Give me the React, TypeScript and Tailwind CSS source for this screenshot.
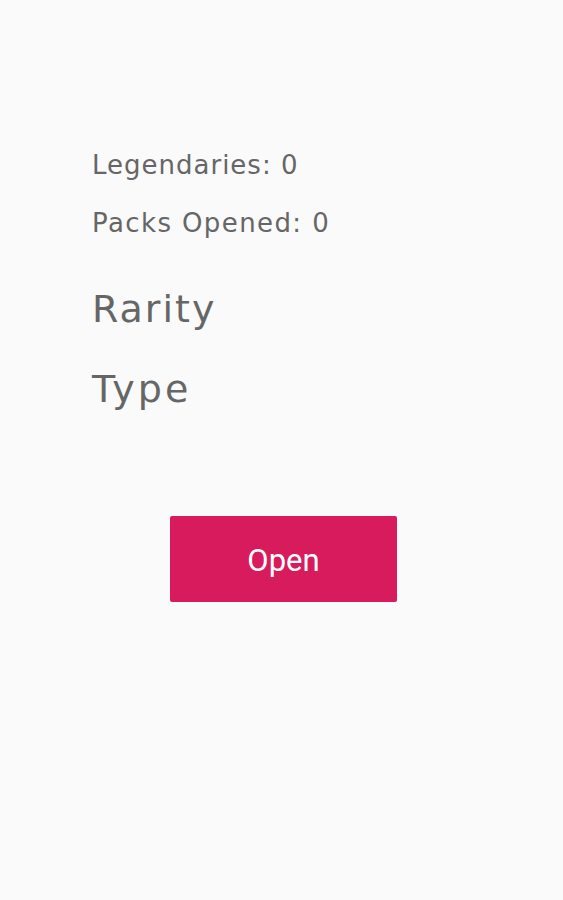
const App = () => {
  return (
    <div className="min-h-[900px] w-full bg-[#fafafa] font-['DejaVu_Sans',sans-serif] text-[#666666]">
      <div className="flex flex-col pl-[92px] pt-[148px]">
        <p className="h-[34px] text-[26px] leading-[34px] tracking-[1px]">Legendaries: 0</p>
        <p className="mt-[24px] h-[34px] text-[26px] leading-[34px] tracking-[1.4px]">Packs Opened: 0</p>
        <h2 className="mt-[44px] h-[50px] text-[38px] leading-[50px] tracking-[2px]">Rarity</h2>
        <h2 className="mt-[30px] h-[50px] text-[38px] leading-[50px] tracking-[3px]">Type</h2>
      </div>
      <div className="mt-[102px] flex justify-center pl-[4px]">
        <button className="h-[86px] w-[227px] rounded-[2px] bg-[#d81b5d] pt-[4px] font-['Roboto',sans-serif] text-[31px] text-white">
          Open
        </button>
      </div>
    </div>
  );
};

export default App;
